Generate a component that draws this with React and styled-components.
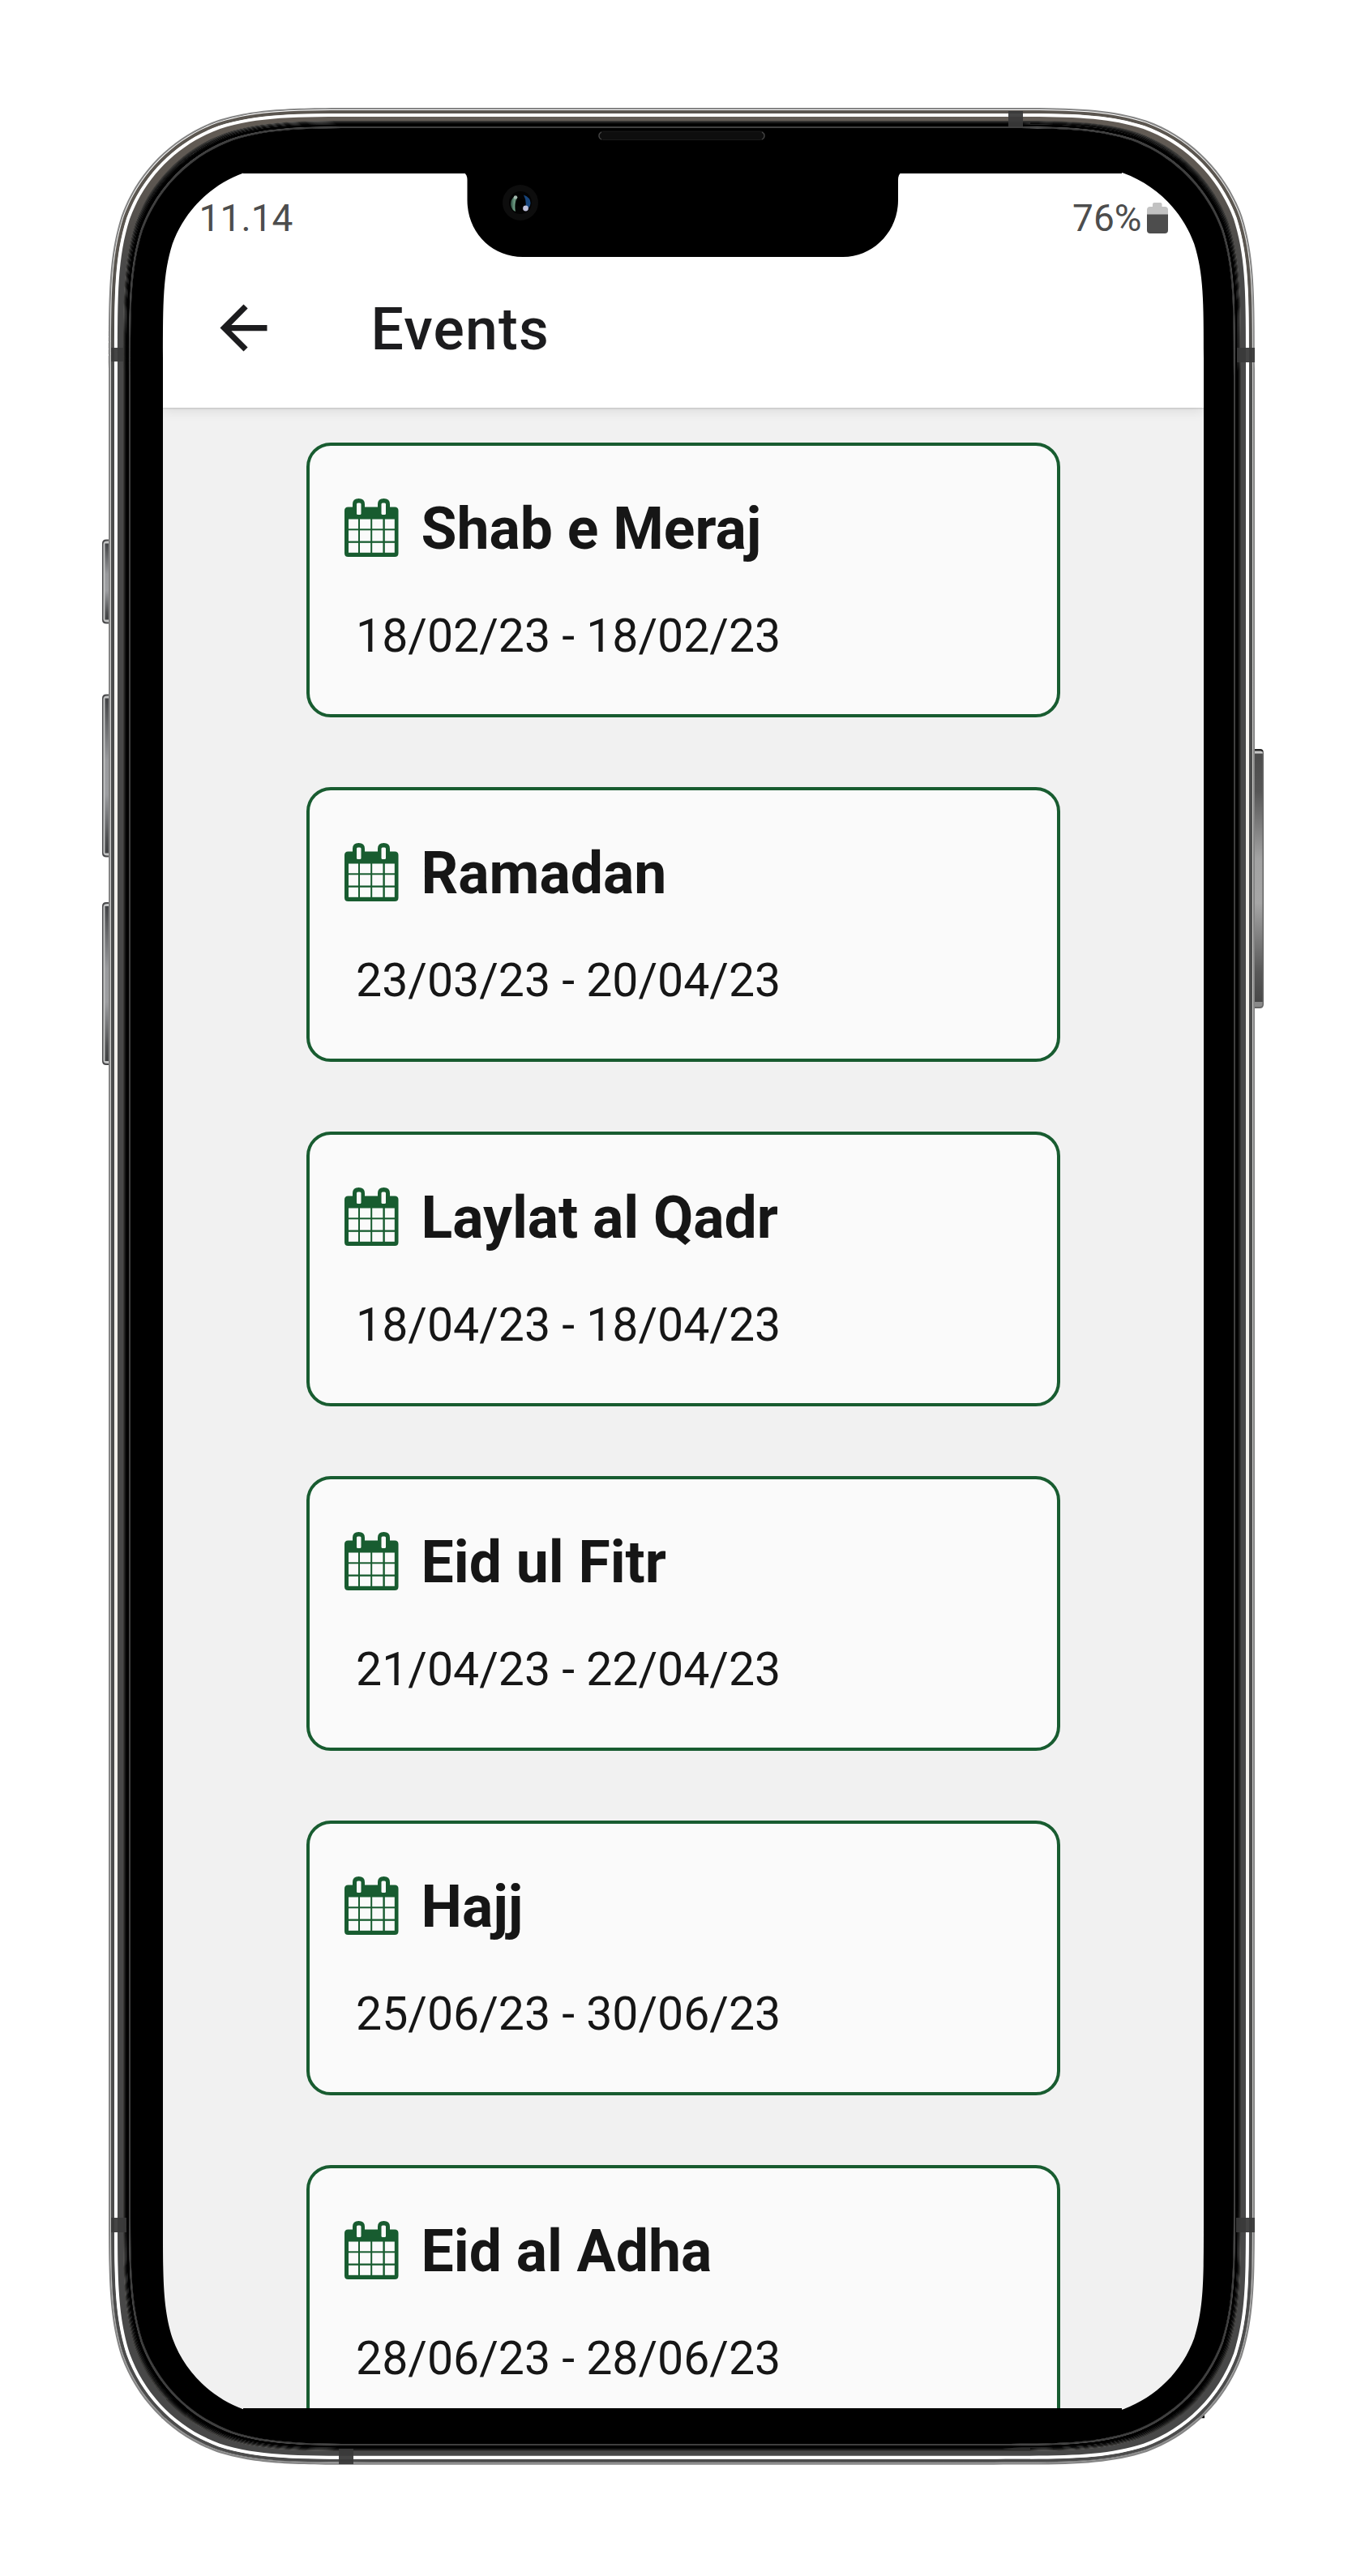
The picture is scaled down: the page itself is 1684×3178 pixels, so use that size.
import React from "react";
import styled, { createGlobalStyle } from "styled-components";

const GlobalStyle = createGlobalStyle`
  * { box-sizing: border-box; }
  html, body { margin: 0; padding: 0; background: #fff; }
  body { font-family: Roboto, "Noto Sans", sans-serif; }
`;

const Stage = styled.main`
  position: relative;
  width: 1684px;
  height: 3178px;
  padding: 214px 199px 207px 201px;
  background: #fff;
  overflow: hidden;
`;

const Screen = styled.section`
  display: flex;
  flex-direction: column;
  width: 1284px;
  height: 2757px;
  background: #f1f1f1;
  overflow: hidden;
`;

const TopArea = styled.header`
  flex: none;
  display: flex;
  flex-direction: column;
  height: 289px;
  background: #fff;
  box-shadow: 0 1px 2px rgba(0, 0, 0, 0.16), 0 4px 14px rgba(0, 0, 0, 0.09);
`;

const StatusBar = styled.div`
  display: flex;
  justify-content: space-between;
  align-items: center;
  height: 110px;
  padding: 0 44px 0 44.5px;
  color: #4d4d4d;
  font-size: 46px;
  line-height: 54px;
`;

const Clock = styled.span`
  letter-spacing: 0.1px;
`;

const BatteryStatus = styled.div`
  display: flex;
  align-items: center;
  gap: 6.500px;
`;

const BatteryGlyph = styled.svg`
  display: block;
  width: 26px;
  height: 38px;
`;

const AppBar = styled.div`
  display: flex;
  align-items: center;
  gap: 113.500px;
  height: 160px;
  padding-left: 56px;
`;

const BackButton = styled.button`
  display: block;
  width: 87px;
  height: 87px;
  padding: 0;
  border: 0;
  background: none;
  color: #1c1c1e;

  svg { display: block; width: 87px; height: 87px; }
`;

const PageTitle = styled.h1`
  margin: 6px 0 0;
  color: #1c1c1e;
  font-size: 71.5px;
  font-weight: 500;
  letter-spacing: 1.2px;
  line-height: 84px;
`;

const EventList = styled.ul`
  display: flex;
  flex-direction: column;
  gap: 85.5px;
  margin: 0;
  padding: 42.5px 177px 0;
  list-style: none;
`;

const EventCard = styled.li`
  flex: none;
  display: flex;
  flex-direction: column;
  height: 339.5px;
  padding: 60px 43px 0;
  border: 4px solid #185c30;
  border-radius: 30px;
  background: #fafafa;
`;

const EventHeading = styled.div`
  display: flex;
  align-items: center;
  gap: 27.500px;
  height: 84px;
`;

const CalendarIcon = styled.svg`
  flex: none;
  display: block;
  width: 67px;
  height: 72px;
  margin-bottom: 2px;
`;

const EventName = styled.h2`
  margin: 2px 0 0;
  color: #161616;
  font-size: 71.5px;
  font-weight: 700;
  line-height: 84px;
  white-space: nowrap;
`;

const EventDates = styled.p`
  margin: 57.5px 0 0 14px;
  color: #161616;
  font-size: 57.200px;
  line-height: 68px;
  white-space: nowrap;
`;

const DeviceFrame = styled.svg`
  position: absolute;
  inset: 0;
  width: 1684px;
  height: 3178px;
  pointer-events: none;
`;

const events = [
  { name: "Shab e Meraj", dates: "18/02/23 - 18/02/23" },
  { name: "Ramadan", dates: "23/03/23 - 20/04/23" },
  { name: "Laylat al Qadr", dates: "18/04/23 - 18/04/23" },
  { name: "Eid ul Fitr", dates: "21/04/23 - 22/04/23" },
  { name: "Hajj", dates: "25/06/23 - 30/06/23" },
  { name: "Eid al Adha", dates: "28/06/23 - 28/06/23" },
];

/* Rounded rectangle whose corners ease gradually into the straight sides. */
function smoothRect(l, t, r, b, radius) {
  const k = [1.528665, 1.08849296, 0.86840694, 0.63149379, 0.07491139, 0.37282383, 0.16905956].map(
    (n) => n * radius
  );
  const [a, c, d, e, f, g, h] = k;
  /* Each corner runs clockwise; the two diagonal pairs differ in which side they enter from. */
  const corner = (x, y, sx, sy, fromVertical) => {
    const pt = (u, v) =>
      fromVertical
        ? `${(x + sx * v).toFixed(2)} ${(y + sy * u).toFixed(2)}`
        : `${(x + sx * u).toFixed(2)} ${(y + sy * v).toFixed(2)}`;
    return (
      `L${pt(a, 0)}C${pt(c, 0)} ${pt(d, 0)} ${pt(e, f)}` +
      `C${pt(g, h)} ${pt(h, g)} ${pt(f, e)}C${pt(0, d)} ${pt(0, c)} ${pt(0, a)}`
    );
  };
  return (
    `M${l + a} ${t}` +
    corner(r, t, -1, 1, false) +
    corner(r, b, -1, -1, true) +
    corner(l, b, 1, -1, false) +
    corner(l, t, 1, 1, true) +
    "Z"
  );
}

const OUTER = { l: 134, t: 133, r: 1548, b: 3040.7, radius: 211 };

/* The glass rim sits slightly off centre inside the metal band. */
const inset = (n) => {
  const rim = n > 16 ? 1 : 0;
  return smoothRect(
    OUTER.l + n + rim * 0.5,
    OUTER.t + n - rim * 1.5,
    OUTER.r - n + rim * 0.5,
    OUTER.b - n + rim * 0.8,
    Math.max(OUTER.radius - n, 200)
  );
};

const opening = smoothRect(201, 201.7, 1485, 2984, 157);

const rings = [
  { at: 0, fill: "#858585" },
  { at: 2, fill: "url(#hairline)" },
  { at: 3, fill: "url(#steel)" },
  { at: 7, fill: "url(#shine)" },
  { at: 11, fill: "url(#steelInner)" },
  { at: 17.5, fill: "#393836" },
  { at: 18.5, fill: "#262625" },
  { at: 19.5, fill: "#141414" },
  { at: 20.5, fill: "#080808" },
  { at: 21.5, fill: "#000" },
  { at: 24.5, fill: "#3f3f3f" },
  { at: 26.5, fill: "#000" },
];

const antennaBands = [
  { x: 137, y: 429, width: 15, height: 17 },
  { x: 1526, y: 429, width: 22, height: 18 },
  { x: 1244, y: 137, width: 18, height: 19 },
  { x: 418, y: 3021, width: 18, height: 19 },
  { x: 137, y: 2736, width: 19, height: 18 },
  { x: 1525, y: 2736, width: 23, height: 18 },
];

function SideKey({ y, height }) {
  return (
    <g>
      <path d={`M136 ${y}h-5q-5 0-5 5v${height - 10}q0 5 5 5h5z`} fill="#4a4a4c" />
      <path d={`M136 ${y + 2}h-4q-4.500 0-4.500 4v${height - 12}q0 4 4.500 4h4z`} fill="#c4c5c5" />
      <rect x="129.500" y={y + 5} width="6" height={height - 10} fill="url(#key)" />
    </g>
  );
}

function Phone() {
  return (
    <DeviceFrame viewBox="0 0 1684 3178" aria-hidden="true">
      <defs>
        <linearGradient id="steel" gradientUnits="userSpaceOnUse" x1="0" y1="133" x2="0" y2="3040">
          <stop offset="0" stopColor="#5b5650" />
          <stop offset="0.06" stopColor="#5b5650" />
          <stop offset="0.12" stopColor="#4b4c4c" />
          <stop offset="1" stopColor="#4c4c4c" />
        </linearGradient>
        <linearGradient id="steelInner" gradientUnits="userSpaceOnUse" x1="0" y1="133" x2="0" y2="3040">
          <stop offset="0" stopColor="#645d56" />
          <stop offset="0.03" stopColor="#5d5751" />
          <stop offset="0.07" stopColor="#484848" />
          <stop offset="1" stopColor="#484848" />
        </linearGradient>
        <linearGradient id="shine" gradientUnits="userSpaceOnUse" x1="0" y1="133" x2="0" y2="3040">
          <stop offset="0" stopColor="#fff" />
          <stop offset="0.14" stopColor="#fff" />
          <stop offset="0.3" stopColor="#f1efea" />
          <stop offset="0.7" stopColor="#f1efea" />
          <stop offset="0.86" stopColor="#fff" />
          <stop offset="1" stopColor="#fff" />
        </linearGradient>
        <linearGradient id="hairline" gradientUnits="userSpaceOnUse" x1="0" y1="133" x2="0" y2="3040">
          <stop offset="0" stopColor="#fff" />
          <stop offset="0.1" stopColor="#d2d2d0" />
          <stop offset="0.9" stopColor="#c4c4c2" />
          <stop offset="1" stopColor="#8e8e8e" />
        </linearGradient>
        <linearGradient id="key" x1="0" y1="0" x2="0" y2="1">
          <stop offset="0" stopColor="#424346" />
          <stop offset="0.1" stopColor="#58595b" />
          <stop offset="0.4" stopColor="#98999c" />
          <stop offset="0.62" stopColor="#9c9da0" />
          <stop offset="0.9" stopColor="#505153" />
          <stop offset="1" stopColor="#404143" />
        </linearGradient>
        <linearGradient id="power" x1="0" y1="0" x2="0" y2="1">
          <stop offset="0" stopColor="#4c4c4c" />
          <stop offset="0.15" stopColor="#565656" />
          <stop offset="0.42" stopColor="#a2a2a2" />
          <stop offset="0.6" stopColor="#a6a6a6" />
          <stop offset="0.88" stopColor="#585858" />
          <stop offset="1" stopColor="#484848" />
        </linearGradient>
        <linearGradient id="lensGreen" x1="0" y1="0" x2="1" y2="0">
          <stop offset="0" stopColor="#2b4a3e" />
          <stop offset="0.5" stopColor="#6c9a82" />
          <stop offset="1" stopColor="#22382d" />
        </linearGradient>
      </defs>

      <path d="M199.500 2960h30v23.300h-30zM1456 2960h30v23.300h-30z" fill="#000" />

      <SideKey y={665.5} height={104} />
      <SideKey y={856.5} height={201} />
      <SideKey y={1113} height={201} />

      <path d="M1546 924h8q5 0 5 5v310q0 5-5 5h-8z" fill="#666" />
      <path d="M1546 924h8q4 0 4.500 3h-12.500z" fill="#262626" />
      <path d="M1546 926.500h9q2.500 0 3 3h-12z" fill="#c8c8c8" />
      <rect x="1547" y="930" width="10.500" height="306" fill="url(#power)" />
      <path d="M1547 1236h10.500v3q0 3-3 3h-7.500z" fill="#8a8a8a" />

      {rings.slice(0, -1).map((ring, i) => (
        <path
          key={ring.at}
          fillRule="evenodd"
          fill={ring.fill}
          d={inset(ring.at) + inset(rings[i + 1].at + 0.3)}
        />
      ))}
      <path d={inset(26.5) + opening} fillRule="evenodd" fill="#000" />
      <path d="M300 190H1384V214H300zM300 2971H1384V2990H300z" fill="#000" />
      <path
        d="M572 213Q576.500 215 576.500 222V247C576.500 287 607 317 645 317H1040C1077 317 1108 286 1108 247V222Q1108 215 1112 213Z"
        fill="#000"
      />

      {antennaBands.map((band) => (
        <rect key={`${band.x}-${band.y}`} {...band} fill="#393939" fillOpacity="0.94" />
      ))}

      <rect x="738.500" y="162" width="205" height="10.500" rx="5" fill="#0e0e0e" stroke="#1a1a1a" />
      <path d="M742 163q-3 1.500-3 4.500t3 4.500M940 163q3 1.500 3 4.500t-3 4.500" fill="none" stroke="#444" strokeWidth="1.2" />

      <circle cx="642" cy="250" r="22" fill="#0d0d0d" />
      <circle cx="642" cy="250" r="14" fill="#030303" />
      <path d="M635 242Q630 246 630 252Q631 259 636 261Q634 250 639 243Z" fill="url(#lensGreen)" />
      <path d="M646 240.500Q655 244 654.500 251Q654 257 647 260Q651 250 646 240.500Z" fill="#17457c" />
      <circle cx="642" cy="250" r="5" fill="#000" />
      <circle cx="636" cy="243.500" r="2.200" fill="#a4b8ae" />
      <circle cx="648.500" cy="257" r="3.400" fill="#bfc1dc" />
    </DeviceFrame>
  );
}

function Calendar() {
  const columns = [5, 19, 34.2, 49.8];
  const widths = [12, 13.2, 13.2, 12];
  const rows = [25.5, 39.3, 54.8];
  const heights = [11.8, 13.2, 12];
  return (
    <CalendarIcon viewBox="0 0 67 72" aria-hidden="true">
      <path
        d="M4.500 10.500H10V7Q10 0 17.500 0T25 7V10.500H41V7Q41 0 48.500 0T56 7V10.500H62Q66.500 10.500 66.500 15V67.500Q66.500 72 62 72H4.500Q0 72 0 67.500V15Q0 10.500 4.500 10.500Z"
        fill="#185c30"
      />
      <rect x="15" y="5.500" width="5.500" height="14.500" rx="1.500" fill="#fafafa" />
      <rect x="45.500" y="5.500" width="5.500" height="14.500" rx="1.500" fill="#fafafa" />
      {rows.map((y, r) =>
        columns.map((x, c) => (
          <rect key={`${x}-${y}`} x={x} y={y} width={widths[c]} height={heights[r]} fill="#fafafa" />
        ))
      )}
    </CalendarIcon>
  );
}

export default function App() {
  return (
    <Stage>
      <GlobalStyle />
      <Screen>
        <TopArea>
          <StatusBar>
            <Clock>11.14</Clock>
            <BatteryStatus>
              <span>76%</span>
              <BatteryGlyph viewBox="0 0 26 38" aria-hidden="true">
                <path d="M7 5V2Q7 0 9 0h7.500q2 0 2 2v3H22q4 0 4 4v6H0V9q0-4 4-4z" fill="#c2c2c2" />
                <path d="M0 14.500h26V34q0 4-4 4H4q-4 0-4-4z" fill="#4d4d4d" />
              </BatteryGlyph>
            </BatteryStatus>
          </StatusBar>
          <AppBar>
            <BackButton aria-label="Back">
              <svg viewBox="0 0 24 24" fill="currentColor">
                <path d="M20 11H7.830l5.590-5.590L12 4l-8 8 8 8 1.410-1.410L7.830 13H20v-2z" />
              </svg>
            </BackButton>
            <PageTitle>Events</PageTitle>
          </AppBar>
        </TopArea>
        <EventList>
          {events.map((event) => (
            <EventCard key={event.name}>
              <EventHeading>
                <Calendar />
                <EventName>{event.name}</EventName>
              </EventHeading>
              <EventDates>{event.dates}</EventDates>
            </EventCard>
          ))}
        </EventList>
      </Screen>
      <Phone />
    </Stage>
  );
}
